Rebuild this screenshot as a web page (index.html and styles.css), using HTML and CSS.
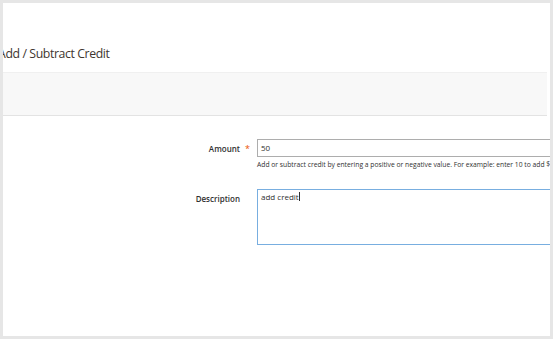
FILE: index.html
```html
<!DOCTYPE html>
<html>
<head>
<meta charset="utf-8">
<link rel="stylesheet" href="styles.css">
</head>
<body>
<div class="page">
  <div class="header">
    <h1 class="title">Add / Subtract Credit</h1>
  </div>
  <div class="band"></div>
  <div class="form">
    <div class="row">
      <div class="label">Amount</div>
      <div class="req">*</div>
      <div class="control">
        <div class="input">50</div>
        <div class="note">Add or subtract credit by entering a positive or negative value. For example: enter 10 to add $10 credit or enter -10 to subtract $10 credit.</div>
      </div>
    </div>
    <div class="row row-desc">
      <div class="label">Description</div>
      <div class="req"></div>
      <div class="control">
        <div class="textarea">add credit<span class="caret"></span></div>
      </div>
    </div>
  </div>
</div>
</body>
</html>
```
FILE: styles.css
```css
html, body {
  margin: 0;
  padding: 0;
  background: #e6e6e6;
}
body {
  font-family: "Open Sans", "Liberation Sans", sans-serif;
  color: #303030;
  padding: 3px;
  height: 339px;
  box-sizing: border-box;
}
.page {
  background: #ffffff;
  height: 333px;
  width: 547px;
  overflow: hidden;
}
.header {
  height: 69px;
  display: flex;
  align-items: flex-end;
}
.title {
  margin: 0 0 9px -5px;
  font-size: 12.3px;
  font-weight: 400;
  letter-spacing: -0.4px;
  color: #41362f;
  line-height: 18px;
  white-space: nowrap;
}
.band {
  height: 42px;
  background: #f8f8f8;
  border-top: 1px solid #f0f0f0;
  border-bottom: 1px solid #e3e3e3;
  margin-right: 3px;
}
.form {
  padding-top: 23px;
  display: flex;
  flex-direction: column;
  gap: 19px;
}
.row {
  display: grid;
  grid-template-columns: 237px 17px 320px;
  align-items: start;
}
.label {
  text-align: right;
  font-size: 8px;
  font-weight: 600;
  line-height: 19px;
  white-space: nowrap;
}
.req {
  color: #eb5202;
  font-size: 9px;
  line-height: 20px;
  padding-left: 5px;
}
.input {
  height: 18px;
  box-sizing: border-box;
  border: 1px solid #adadad;
  font-size: 8px;
  line-height: 16px;
  padding-left: 3px;
}
.note {
  font-size: 6.75px;
  line-height: 10px;
  margin-top: 3px;
  white-space: nowrap;
  color: #303030;
}
.textarea {
  height: 56px;
  box-sizing: border-box;
  border: 1px solid #78aee0;
  font-size: 8px;
  line-height: 14px;
  padding-left: 3px;
}
.caret {
  display: inline-block;
  width: 1px;
  height: 9px;
  background: #303030;
  vertical-align: -1px;
}
```
